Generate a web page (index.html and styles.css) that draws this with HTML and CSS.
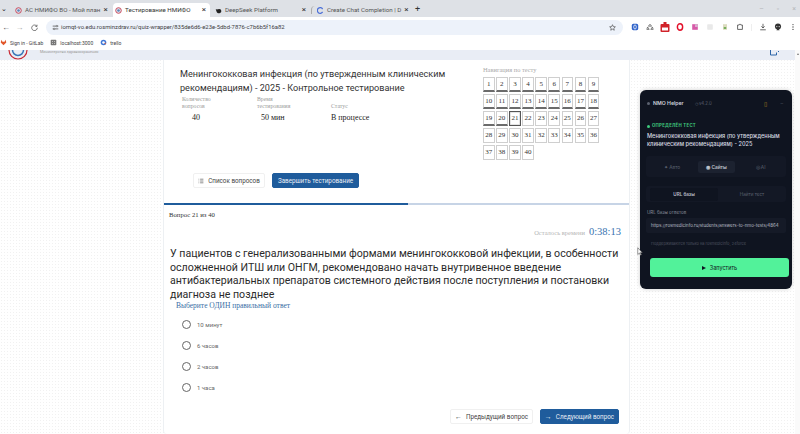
FILE: index.html
```html
<!DOCTYPE html>
<html lang="ru">
<head>
<meta charset="utf-8">
<title>Тестирование НМИФО</title>
<link rel="stylesheet" href="styles.css">
</head>
<body>
<div class="tabstrip">
  <span class="tab-caret">⌄</span>
  <div class="tab"><svg class="fav" viewBox="0 0 10 10"><circle cx="5" cy="5" r="4" fill="#dfe6ee" stroke="#c9475a" stroke-width="1.4"/><circle cx="5" cy="5" r="1.8" fill="#5b84b8"/></svg><span class="tab-name">АС НМИФО ВО - Мой план</span><span class="tab-x">×</span></div>
  <div class="tab active"><svg class="fav" viewBox="0 0 10 10"><circle cx="5" cy="5" r="4" fill="#dfe6ee" stroke="#c9475a" stroke-width="1.4"/><circle cx="5" cy="5" r="1.8" fill="#5b84b8"/></svg><span class="tab-name">Тестирование НМИФО</span><span class="tab-x">×</span></div>
  <div class="tab"><svg class="fav" viewBox="0 0 10 10"><path d="M1 3c2 1 3 0 5 0s3 1 3 3-2 3-4 3-3-2-4-6z" fill="#222"/></svg><span class="tab-name">DeepSeek Platform</span><span class="tab-x">×</span></div>
  <div class="tab last"><svg class="fav" viewBox="0 0 10 10"><path d="M8 3a4 4 0 1 0 0 4" fill="none" stroke="#4a6fd8" stroke-width="1.8"/></svg><span class="tab-name">Create Chat Completion | D</span><span class="tab-x">×</span></div>
  <span class="tab-plus">+</span>
  <div class="win-controls"><span>–</span><span>▫</span><span>×</span></div>
</div>
<div class="toolbar">
  <span class="nav-btn">←</span><span class="nav-btn dim">→</span>
  <svg class="nav-icon" viewBox="0 0 10 10"><path d="M8.3 3.2A4 4 0 1 0 9 5.4M8.6 1v2.4H6.2" fill="none" stroke="#474747" stroke-width="1"/></svg>
  <div class="omnibox">
    <svg class="tune" viewBox="0 0 10 10"><path d="M1 3h5M8 3h1M1 7h1M4 7h5" stroke="#444" stroke-width="1"/><circle cx="7" cy="3" r="1.1" fill="none" stroke="#444" stroke-width=".8"/><circle cx="3" cy="7" r="1.1" fill="none" stroke="#444" stroke-width=".8"/></svg>
    <span class="url">iomqt-vo.edu.rosminzdrav.ru/quiz-wrapper/835de6d6-e23e-5dbd-7876-c7b6b5f16a82</span>
    <svg class="star" viewBox="0 0 10 10"><path d="M5 1l1.2 2.7 2.9.3-2.2 2 .6 2.9L5 7.400 2.500 8.900l.6-2.900-2.200-2 2.900-.3z" fill="none" stroke="#444" stroke-width=".9"/></svg>
  </div>
  <div class="ext-icons">
    <svg viewBox="0 0 10 10"><rect x="1" y="1" width="8" height="8" rx="2" fill="#2e62c9"/><rect x="3.500" y="2.500" width="3" height="5" rx="1.500" fill="none" stroke="#fff"/></svg>
    <svg viewBox="0 0 10 10"><path d="M5 1.500L7 4H3zM2 5l2 3H1zM8 5l1 3H6z" fill="none" stroke="#555" stroke-width=".9"/></svg>
    <svg class="ext-wide" viewBox="0 0 10 10"><rect x=".5" y="2" width="9" height="8" rx="1" fill="#d1232a"/><rect x="3.500" y="0" width="3" height="3" fill="#d1232a"/><rect x="2" y="5.500" width="6" height="3" fill="#fff"/></svg>
    <svg viewBox="0 0 10 10"><ellipse cx="5" cy="5" rx="3.300" ry="4" fill="none" stroke="#e3102a" stroke-width="1.800"/></svg>
    <svg viewBox="0 0 10 10"><rect x="1.500" y="1.500" width="7" height="7" fill="#d75aa8"/><rect x="5" y="1.500" width="3.500" height="3.500" fill="#d9b0cf"/></svg>
    <svg viewBox="0 0 10 10"><rect x="1.500" y="1.500" width="7" height="7" rx="1" fill="#e9e9e9"/></svg>
    <svg viewBox="0 0 10 10"><rect x="2.500" y="1.500" width="5" height="7" fill="#dcdcc0"/><rect x="3.500" y="5" width="3" height="2.500" fill="#79b060"/></svg>
    <svg viewBox="0 0 10 10"><path d="M2 2.500h2a1 1 0 0 1 2 0h2v5.500H2z" fill="none" stroke="#444" stroke-width="1"/></svg>
    <span class="ext-sep"></span>
    <svg viewBox="0 0 10 10"><path d="M5 1v5M3 4.200L5 6.300 7 4.200M1.500 8.500h7" fill="none" stroke="#444" stroke-width="1"/></svg>
    <svg viewBox="0 0 10 10"><circle cx="5" cy="4.500" r="3.800" fill="#333"/><path d="M3 9h4L5 6z" fill="#333"/><circle cx="3.500" cy="4.500" r=".8" fill="#ddd"/><circle cx="6.500" cy="4.500" r=".8" fill="#ddd"/></svg>
    <svg viewBox="0 0 10 10"><circle cx="5" cy="2" r=".8" fill="#444"/><circle cx="5" cy="5" r=".8" fill="#444"/><circle cx="5" cy="8" r=".8" fill="#444"/></svg>
  </div>
</div>
<div class="bookmarks">
  <span class="bm"><svg viewBox="0 0 10 10"><path d="M5 9L1 5l1-4 1.500 3h3L8 1l1 4z" fill="#e2582c"/></svg>Sign in - GitLab</span>
  <span class="bm"><svg viewBox="0 0 10 10"><rect x="1" y="1" width="8" height="8" rx="1" fill="#777"/><path d="M3 3h1v1H3zM6 3h1v1H6zM3 6h1v1H3zM6 6h1v1H6z" fill="#fff"/></svg>localhost:3000</span>
  <span class="bm"><svg viewBox="0 0 10 10"><circle cx="5" cy="5" r="4" fill="#3f78d8"/><circle cx="5" cy="5" r="1.800" fill="#fff"/><path d="M6 6.500L8.500 5 8 8z" fill="#d9583f"/></svg>trello</span>
</div>
<div class="viewport">
  <div class="site-header">
    <svg class="site-logo" viewBox="0 0 20 10"><circle cx="10" cy="0" r="9" fill="none" stroke="#c92a35" stroke-width="1.200"/><circle cx="10" cy="0" r="5.500" fill="none" stroke="#3a78b8" stroke-width="1.500"/></svg>
    <span class="site-name">Министерство здравоохранения</span>
    <svg class="site-user" viewBox="0 0 10 6"><path d="M.5 0v5h6V2.500M8 1.500h1" fill="none" stroke="#2c65a8" stroke-width="1"/></svg>
  </div>
  <div class="page">
    <main class="card">
      <section class="overview">
        <div class="info">
          <h1 class="quiz-title">Менингококковая инфекция (по утвержденным клиническим рекомендациям) - 2025 - Контрольное тестирование</h1>
          <div class="facts">
            <div class="fact f1"><div class="fact-label">Количество<br>вопросов</div><div class="fact-value center">40</div></div>
            <div class="fact f2"><div class="fact-label">Время<br>тестирования</div><div class="fact-value center">50 мин</div></div>
            <div class="fact f3"><div class="fact-label"><br>Статус</div><div class="fact-value">В процессе</div></div>
          </div>
          <div class="actions">
            <button class="btn btn-light btn-list"><svg viewBox="0 0 10 10"><path d="M1 2h1M1 5h1M1 8h1M3.500 2h5.500M3.500 5h5.500M3.500 8h5.500" stroke="#555" stroke-width="1.100"/></svg>Список вопросов</button>
            <button class="btn btn-blue btn-finish">Завершить тестирование</button>
          </div>
        </div>
        <nav class="quiz-nav">
          <div class="nav-title">Навигация по тесту</div>
          <div class="nav-grid" id="grid"></div>
        </nav>
      </section>
      <div class="progress"><div class="progress-fill"></div></div>
      <section class="question">
        <div class="q-number">Вопрос 21 из 40</div>
        <div class="timer"><span class="timer-label">Осталось времени</span><span class="timer-value">0:38:13</span></div>
        <p class="q-text">У пациентов с генерализованными формами менингококковой инфекции, в особенности осложненной ИТШ или ОНГМ, рекомендовано начать внутривенное введение антибактериальных препаратов системного действия после поступления и постановки диагноза не позднее</p>
        <div class="q-hint">Выберите ОДИН правильный ответ</div>
        <ul class="answers">
          <li><span class="radio"></span>10 минут</li>
          <li><span class="radio"></span>6 часов</li>
          <li><span class="radio"></span>2 часов</li>
          <li><span class="radio"></span>1 часа</li>
        </ul>
        <div class="q-actions">
          <button class="btn btn-light btn-prev"><span class="arrow">←</span>Предыдущий вопрос</button>
          <button class="btn btn-blue btn-next"><span class="arrow">→</span>Следующий вопрос</button>
        </div>
      </section>
    </main>
  </div>
  <aside class="helper">
    <header class="helper-head">
      <span class="h-dot"></span><span class="h-name">NMO Helper</span>
      <span class="h-ver">◷ v4.2.0</span>
      <span class="h-lock">▯</span><span class="h-min">–</span>
    </header>
    <div class="h-status"><span class="h-green"></span>ОПРЕДЕЛЁН ТЕСТ</div>
    <div class="h-title">Менингококковая инфекция (по утвержденным клиническим рекомендациям) - 2025</div>
    <div class="h-tabs">
      <span class="h-tab">✦ Авто</span>
      <span class="h-tab on">◉ Сайты</span>
      <span class="h-tab">◎ AI</span>
    </div>
    <div class="h-sub">
      <span class="h-subtab on">URL базы</span>
      <span class="h-subtab">Найти тест</span>
    </div>
    <div class="h-label">URL базы ответов</div>
    <div class="h-input">https://rosmedicinfo.ru/students/answers-to-nmo-tests/4864</div>
    <div class="h-note">Поддерживаются только на rosmedicinfo, 24forcе</div>
    <button class="h-run"><span class="h-play"></span>Запустить</button>
  </aside>
  <svg class="cursor" viewBox="0 0 8 12"><path d="M1 1v9l2.200-2 1.500 3 1.200-.6-1.500-2.900H7z" fill="#fff" stroke="#555" stroke-width=".8"/></svg>
  <div class="scrollbar"><span class="scroll-up"></span></div>
</div>
<script src="grid.js"></script>
</body>
</html>
```
FILE: grid.js
```js
var grid = document.getElementById('grid');
for (var i = 1; i <= 40; i++) {
  var c = document.createElement('span');
  c.className = 'cell' + (i <= 20 ? ' done' : '') + (i === 21 ? ' current' : '');
  c.textContent = i;
  grid.appendChild(c);
}
```
FILE: styles.css
```css
* { box-sizing: border-box; }
html, body { margin: 0; height: 434px; overflow: hidden; background: #fff; }
body { font-family: "Roboto", "Open Sans", sans-serif; color: #333; }
button { font-family: inherit; cursor: pointer; }
.tabstrip, .toolbar, .bookmarks, .viewport { opacity: .999; }

.tabstrip { height: 17px; background: #dee1e6; display: flex; align-items: flex-end; padding-left: 1px; font-size: 6.200px; color: #555; }
.tab-caret { width: 9px; font-size: 7px; align-self: center; color: #222; }
.tab { width: 100px; height: 14px; display: flex; align-items: center; gap: 3px; padding: 0 4px 0 5px; border-radius: 4px 4px 0 0; }
.tab.active { width: 97px; margin-left: 3px; padding-left: 2px; background: #fff; color: #333; }
.tab.last { border-left: 1px solid #aaa; height: 8px; margin-bottom: 3px; margin-left: 1px; }
.fav { width: 7px; height: 7px; flex: none; }
.tab-name { flex: 1; white-space: nowrap; }
.tab-x { font-size: 8px; line-height: 8px; color: #333; }
.tab-plus { margin-left: 4px; font-size: 9px; align-self: center; color: #333; }
.win-controls { margin-left: auto; display: flex; gap: 13px; padding-right: 4px; align-self: center; font-size: 7px; color: #b5b7ba; }

.toolbar { height: 18px; background: #fff; display: flex; align-items: center; padding: 2px 0 0 0; }
.nav-btn { width: 15px; font-size: 8px; color: #555; text-align: center; flex: none; }
.nav-btn:first-child { width: 12px; }
.nav-btn.dim { color: #aaa; }
.nav-icon { width: 7px; height: 7px; margin: 0 8px 0 4px; flex: none; }
.omnibox { width: 577px; height: 15px; background: #edf2fa; border-radius: 8px; display: flex; align-items: center; padding: 0 7px 0 6px; flex: none; }
.tune { width: 7px; height: 7px; flex: none; }
.url { flex: 1; margin-left: 2px; font-size: 5.900px; color: #3d4043; }
.star { width: 7px; height: 7px; flex: none; }
.ext-icons { display: flex; align-items: center; gap: 7px; margin-left: 8px; }
.ext-icons svg { width: 8px; height: 8px; flex: none; }
.ext-icons .ext-wide { width: 10px; height: 10px; margin: 0 -1px; }
.ext-sep { width: 1px; height: 7px; background: #eeeeee; flex: none; }

.bookmarks { height: 15px; background: #fff; display: flex; align-items: center; gap: 7px; font-size: 5px; color: #444; }
.bm { display: flex; align-items: center; gap: 3px; }
.bm svg { width: 7px; height: 7px; flex: none; }

.viewport { position: relative; height: 384px; overflow: hidden; background: #fff; background-image: radial-gradient(#f1f1f1 .5px, transparent .5px); background-size: 3px 3px; }
.site-header { height: 10px; background: #e9edf5; display: flex; align-items: flex-start; overflow: hidden; padding-left: 8px; }
.site-logo { width: 20px; height: 10px; flex: none; }
.site-name { margin-left: 12px; font-size: 3.800px; color: #999; line-height: 4px; }
.site-user { margin-left: auto; margin-right: 20px; width: 10px; height: 6px; }

.page { display: flex; padding-left: 163px; padding-right: 170px; }
.card { width: 467px; height: 374px; background: #fff; border-right: 1px solid #edf0f3; border-left: 1px solid #edf0f3; border-radius: 0 0 4px 4px; }
.overview { height: 143px; display: flex; padding-left: 16px; }
.info { width: 303px; }
.quiz-title { margin: 7px 0 0; width: 290px; font-size: 9.100px; line-height: 14px; font-weight: 400; color: #333; }
.facts { display: flex; margin-top: 1px; font-family: "Liberation Serif", serif; }
.fact { flex: none; }
.f1 { width: 75px; padding-left: 2px; }
.f2 { width: 76px; padding-left: 2px; }
.fact-label { font-size: 5.800px; line-height: 7px; color: #9a9a9a; }
.fact-value { font-size: 8px; line-height: 10px; color: #222; margin-top: 3px; }
.fact-value.center { padding-left: 10px; }
.f2 .fact-value.center { padding-left: 4px; }
.actions { display: flex; gap: 7px; margin: 50px 0 0 13px; }
.btn { height: 15px; padding: 0; font-size: 6.300px; border-radius: 2px; border: 1px solid #f0f0f0; display: flex; align-items: center; justify-content: center; gap: 4px; white-space: nowrap; }
.btn-list { width: 72px; }
.btn-finish { width: 87px; }
.btn-prev { width: 83px; }
.btn-next { width: 79px; }
.btn-light { background: #fff; color: #444; }
.btn-blue { background: #1f5c9c; color: #e9eef5; border-color: #1f5c9c; }
.btn svg { width: 6px; height: 6px; flex: none; }
.arrow { font-size: 7px; }
.quiz-nav { width: 130px; }
.nav-title { font: 6.400px/8px "Liberation Serif", serif; color: #aaa; margin-top: 6px; }
.nav-grid { display: grid; grid-template-columns: repeat(9, 11.500px); column-gap: 1.600px; row-gap: 2px; margin-top: 3px; }
.cell { height: 15px; border: 1px solid #cfcfcf; background: #fff; font: 7px/12px "Liberation Serif", serif; text-align: center; color: #333; }
.cell.done { border-bottom: 2px solid #6b6b6b; }
.cell.current { border: 1px solid #555; box-shadow: inset 0 0 0 .5px #ccc; }

.progress { height: 2px; background: #c7d4e6; }
.progress-fill { width: 52.500%; height: 100%; background: #1f5c9c; }

.question { padding: 0 8px 0 6px; }
.q-number { font: 6.700px/8px "Liberation Serif", serif; color: #333; margin: 6px 0 0 -1px; }
.timer { display: flex; justify-content: flex-end; align-items: baseline; gap: 4px; margin-top: 7px; font-family: "Liberation Serif", serif; }
.timer-label { font-size: 6.500px; color: #b5b5b5; }
.timer-value { font-size: 10.500px; color: #3873b0; }
.q-text { margin: 10px 0 0; font-size: 10.600px; line-height: 13.500px; color: #2b2b2b; }
.q-hint { font: 7.500px/9px "Liberation Serif", serif; color: #3a6ea5; margin: 0 0 0 6px; }
.answers { list-style: none; margin: 4px 0 0 12px; padding: 0; font-size: 6px; color: #666; }
.answers li { height: 21px; display: flex; align-items: center; gap: 6px; }
.radio { width: 9px; height: 9px; border: 1px solid #666; border-radius: 50%; background: #fff; flex: none; }
.q-actions { display: flex; justify-content: flex-end; gap: 7px; margin-top: 11px; padding-right: 2px; }

.helper { position: absolute; left: 640px; top: 40px; width: 152px; height: 199px; background: #0f1420; border-radius: 6px; color: #cfd3db; box-shadow: 0 0 4px rgba(0,0,0,.2); font-family: "Inter", sans-serif; }
.helper-head { height: 24px; display: flex; align-items: center; padding: 2px 9px 0 7px; font-size: 5.200px; }
.h-dot { width: 3px; height: 3px; border-radius: 50%; background: #5c6270; margin-right: 3px; }
.h-name { font-weight: 600; color: #cdd1d9; }
.h-ver { margin-left: 11px; color: #5c6270; font-size: 4.300px; }
.h-lock { margin-left: auto; color: #b58a22; font-size: 6px; }
.h-min { margin-left: 13px; color: #4f5564; }
.h-status { display: flex; align-items: center; gap: 2px; margin: 9px 0 0 7px; font-size: 4.300px; line-height: 6px; font-weight: 700; color: #3fca7d; letter-spacing: .3px; }
.h-green { width: 3px; height: 3px; border-radius: 50%; background: #3fca7d; }
.h-title { margin: 3px 6px 0 7px; font-size: 5.600px; line-height: 8px; font-weight: 500; color: #d7dae0; }
.h-tabs { margin: 8px 6px 0; height: 21px; background: #131825; border-radius: 3px; display: grid; grid-template-columns: 52px 37px 1fr; align-items: center; font-size: 4.800px; color: #5c6270; text-align: center; }
.h-tab { line-height: 12px; border-radius: 2px; }
.h-tab.on { background: #1c2230; color: #bfc3cc; font-weight: 600; }
.h-sub { margin: 9px 6px 0; height: 16px; background: #131825; border-radius: 3px; display: grid; grid-template-columns: 68px 1fr; align-items: center; padding-left: 4px; font-size: 4.600px; text-align: center; color: #5c6270; }
.h-subtab.on { color: #b9bdc6; font-weight: 600; line-height: 13px; background: #0f1420; border-radius: 2px; }
.h-label { margin: 7px 0 0 7px; font-size: 4.500px; line-height: 7px; color: #878c98; }
.h-input { margin: 2px 6px 0; height: 15px; padding: 0 5px; background: #151a27; border-radius: 2px; font-size: 4.400px; line-height: 15px; color: #b9bdc6; white-space: nowrap; }
.h-note { margin: 7px 6px 0; padding-left: 5px; font-size: 3.900px; line-height: 7px; color: #4c515f; }
.h-run { display: flex; align-items: center; justify-content: center; gap: 4px; width: 139px; height: 19px; margin: 11px 0 0 10px; border: 0; border-radius: 3px; background: #52f29a; color: #0f1420; font-size: 5.500px; font-family: inherit; }
.h-play { width: 0; height: 0; border-left: 4px solid #0f1420; border-top: 2.500px solid transparent; border-bottom: 2.500px solid transparent; }
.cursor { position: absolute; left: 637px; top: 197px; width: 6px; height: 9px; }
.scrollbar { position: absolute; right: 0; top: 0; width: 5px; height: 100%; background: #fafafa; }
.scroll-up { display: block; margin: 3px auto 0; width: 0; height: 0; border-left: 1.500px solid transparent; border-right: 1.500px solid transparent; border-bottom: 2px solid #777; }
```
